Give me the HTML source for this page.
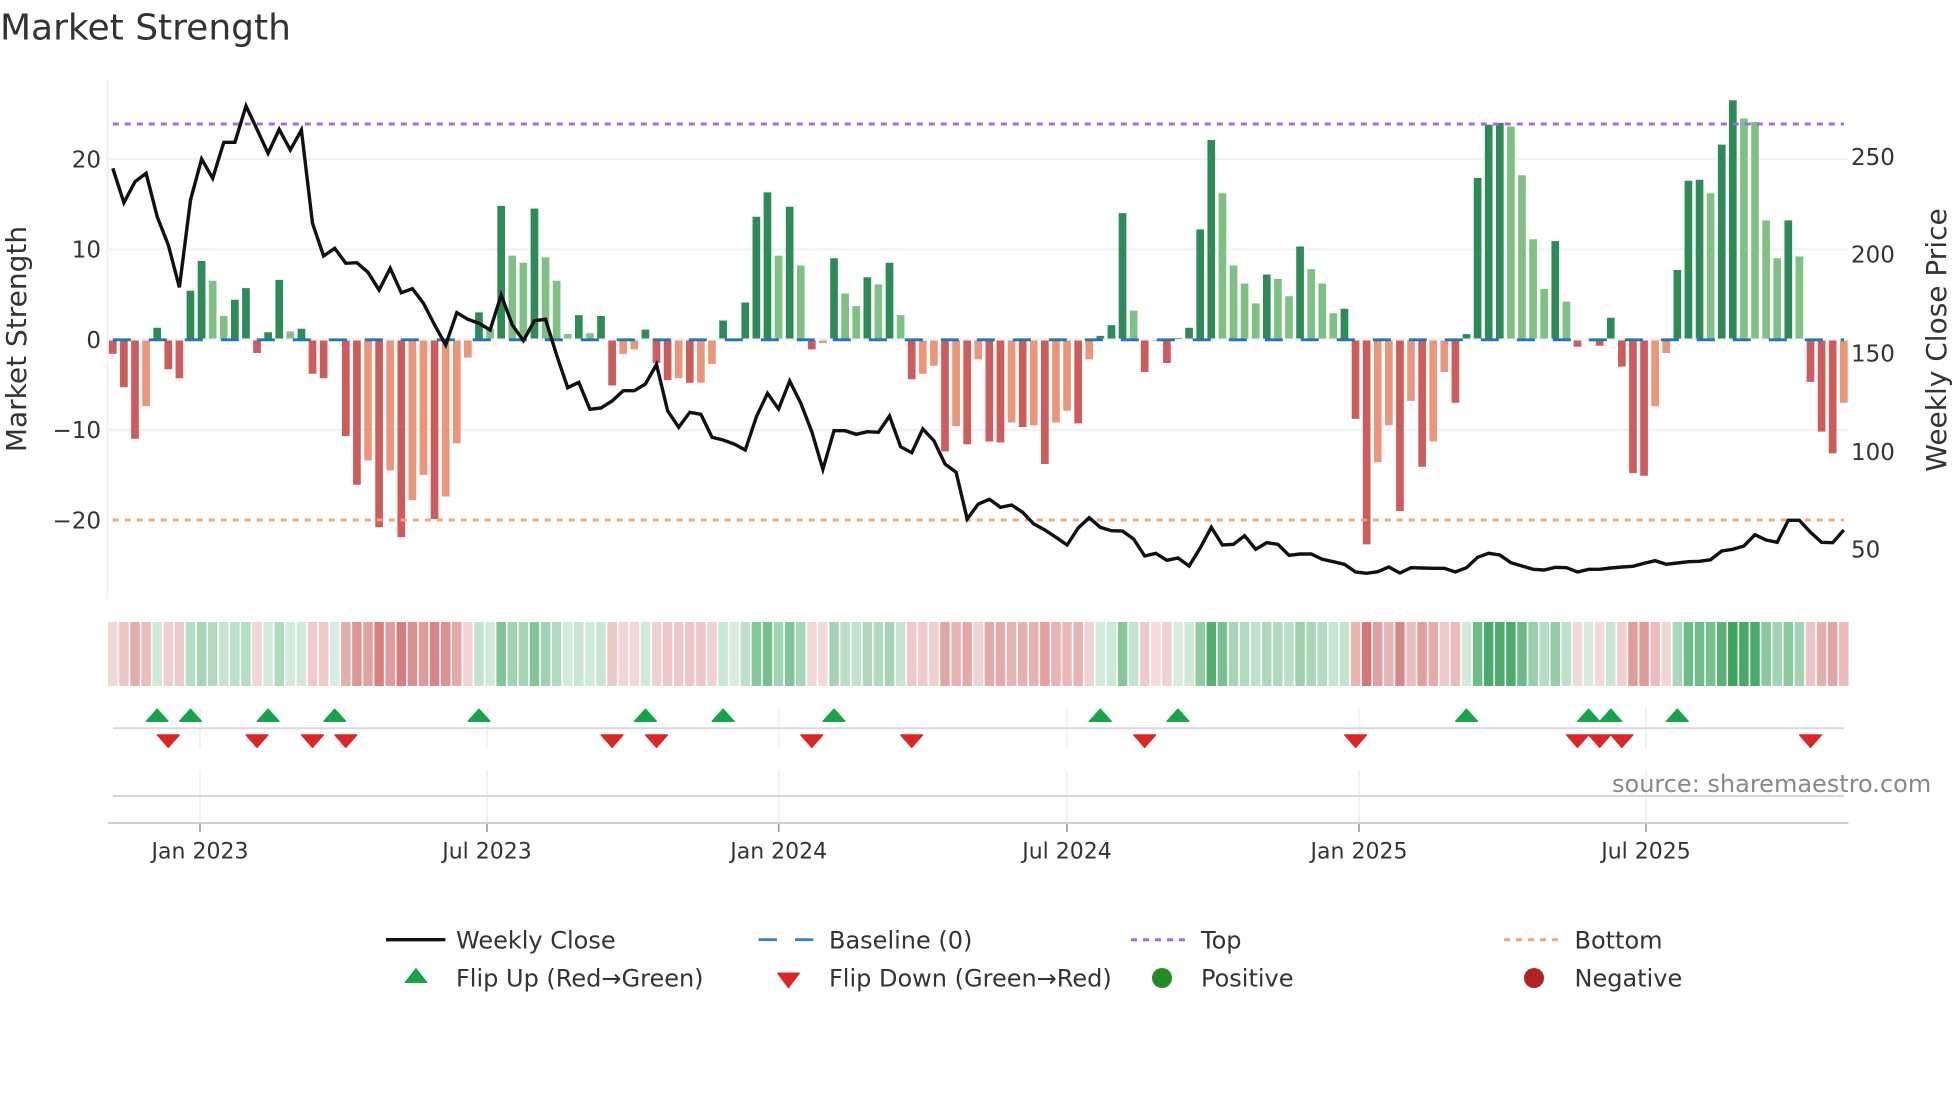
<!DOCTYPE html>
<html><head><meta charset="utf-8"><title>Market Strength</title>
<style>html,body{margin:0;padding:0;background:#fff;width:1960px;height:1102px;overflow:hidden}svg{display:block;filter:blur(.35px)}text{font-family:"DejaVu Sans",sans-serif;fill:#333}</style></head>
<body>
<svg id="s" xmlns="http://www.w3.org/2000/svg" width="1960" height="1102" viewBox="0 0 1960 1102">
<rect width="1960" height="1102" fill="#fff"/>
<g id="grid" stroke="#f1f2f6" stroke-width="2.4">
<line x1="108" x2="1848" y1="159" y2="159"/><line x1="108" x2="1848" y1="249.5" y2="249.5"/><line x1="108" x2="1848" y1="339.5" y2="339.5"/><line x1="108" x2="1848" y1="430" y2="430"/>
<line x1="107.5" x2="107.5" y1="80" y2="599"/>
</g>
<g id="vg" stroke="#eceef1" stroke-width="1.5"></g>
<g id="bars"></g>
<line x1="112.8" x2="1844" y1="520" y2="520" stroke="#f0a56f" stroke-width="3" stroke-dasharray="6 6" opacity=".95"/>
<line x1="112.8" x2="1844" y1="124" y2="124" stroke="#9f6fe0" stroke-width="3" stroke-dasharray="6 6"/>
<line x1="112.8" x2="1844" y1="339.8" y2="339.8" stroke="#1f77b4" stroke-width="2.8" stroke-dasharray="18 18"/>
<path id="pl" fill="none" stroke="#111" stroke-width="3.4" stroke-linejoin="miter"/>
<g id="heat"></g>
<line x1="113" x2="1844" y1="728.3" y2="728.3" stroke="#d6d9de" stroke-width="2"/>
<line x1="113" x2="1844" y1="796" y2="796" stroke="#d8d8d8" stroke-width="2"/>
<line x1="108" x2="1848.5" y1="823" y2="823" stroke="#cfcfcf" stroke-width="2"/>
<g id="flips"></g>
<g font-size="23">
<text x="101" y="167.3" text-anchor="end">20</text>
<text x="101" y="257.5" text-anchor="end">10</text>
<text x="101" y="348" text-anchor="end">0</text>
<text x="101" y="438" text-anchor="end">−10</text>
<text x="101" y="528.5" text-anchor="end">−20</text>
<text x="1851" y="165">250</text>
<text x="1851" y="262.5">200</text>
<text x="1851" y="361.5">150</text>
<text x="1851" y="460">100</text>
<text x="1851" y="557.5">50</text>
</g>
<g font-size="22" text-anchor="middle">
<text x="200" y="858.5">Jan 2023</text>
<text x="487" y="858.5">Jul 2023</text>
<text x="778.7" y="858.5">Jan 2024</text>
<text x="1067" y="858.5">Jul 2024</text>
<text x="1359" y="858.5">Jan 2025</text>
<text x="1646" y="858.5">Jul 2025</text>
</g>
<text x="0" y="39.5" font-size="36">Market Strength</text>
<text font-size="28" text-anchor="middle" transform="translate(26 339) rotate(-90)">Market Strength</text>
<text font-size="28" text-anchor="middle" transform="translate(1946 340) rotate(-90)">Weekly Close Price</text>
<text x="1612" y="792" font-size="24" style="fill:#888">source: sharemaestro.com</text>
<line x1="386" x2="445.4" y1="939.7" y2="939.7" stroke="#111" stroke-width="3.4"/>
<line x1="758.6" x2="813.3" y1="939.7" y2="939.7" stroke="#1f77b4" stroke-width="2.8" stroke-dasharray="18.3 18.1" opacity=".9"/>
<line x1="1131" x2="1187" y1="939.7" y2="939.7" stroke="#9f6fe0" stroke-width="3" stroke-dasharray="6 6"/>
<line x1="1504" x2="1559" y1="939.7" y2="939.7" stroke="#f0a56f" stroke-width="3" stroke-dasharray="6 6"/>
<path d="M416 968.8L405.5 982.3H426.5Z" fill="#16a34a" stroke="#16a34a" stroke-width="1.5" stroke-linejoin="round"/>
<path d="M788.5 987.5L778 973.3H799Z" fill="#dc2626" stroke="#dc2626" stroke-width="1.5" stroke-linejoin="round"/>
<circle cx="1162" cy="978" r="10" fill="#228b22"/>
<circle cx="1534" cy="978" r="10" fill="#b22222"/>
<g font-size="24">
<text x="456" y="948.5">Weekly Close</text>
<text x="829" y="948.5">Baseline (0)</text>
<text x="1201" y="948.5">Top</text>
<text x="1574.5" y="948.5">Bottom</text>
<text x="456" y="986.5">Flip Up (Red→Green)</text>
<text x="829" y="986.5">Flip Down (Green→Red)</text>
<text x="1201" y="986.5">Positive</text>
<text x="1574.5" y="986.5">Negative</text>
</g>
</svg>
<script>
var NS="http://www.w3.org/2000/svg",X0=112.8,DX=11.096;
function el(p,t,a){var e=document.createElementNS(NS,t);for(var k in a)e.setAttribute(k,a[k]);document.getElementById(p).appendChild(e);return e}
var B="-1.6 -5.3 -11 -7.4l 1.3 -3.3 -4.3 5.4 8.7 6.5l 2.6l 4.4 5.7 -1.5 .8 6.6 .9l 1.2 -3.8 -4.3 0 -10.7 -16.1 -13.4l -20.8 -14.5l -21.9 -17.8l -15l -19.9 -17.4l -11.5l -2l 3 1.2l 14.8 9.3l 8.5l 14.5 9.1l 6.5l .6l 2.7 .7l 2.6 -5.1 -1.6l -1.1l 1.1 -2.6 -4.5 -4.3l -4.8 -4.8l -2.7l 2.1 0 4.1 13.6 16.3 9.3l 14.7 8.2l -1.1 -.4l 9 5.1l 3.7l 6.9 6.1l 8.5 2.7l -4.4 -3.8l -2.9l -12.4 -9.6l -11.6 -2.2l -11.3 -11.4 -9.2l -9.7 -9.5l -13.8 -9.2l -7.9l -9.3 -2.2l .4 1.6 14 3.2l -3.6 -.1l -2.6 .15 1.3 12.2 22.1 16.2l 8.2l 6.2l 4l 7.2 6.7l 4.8l 10.3 7.8l 6.2l 2.9l 3.4 -8.8 -22.7 -13.6l -9.5l -19 -6.8l -14.1 -11.3l -3.6l -7 .6 17.9 23.8 24 23.6l 18.2l 11.1l 5.6l 10.9 4.2l -.8 0 -.7 2.4 -3 -14.8 -15.1 -7.4l -1.5l 7.7 17.6 17.7 16.2l 21.6 26.5 24.5l 24.1l 13.2l 9l 13.2 9.2l -4.7 -10.2 -12.6 -7l".split(" ");
var P=[168.3,202.7,181.7,173.3,216.7,245,287.3,200,159,178.3,142.3,142.3,106,129.3,153.3,129.3,150,130,223.3,256,248.3,263.3,262.7,272.3,290,268.3,292.7,288.7,303.3,325,345,312.7,319.3,323.3,330,295,325,340.7,320.7,319.3,355,387.7,382.3,409.3,408,401,390.7,390.7,384,364.5,410.7,427.3,412.3,414.3,437.3,440,444,450,416.7,393.3,409,381,403.3,431.7,469.3,430.7,430.7,434.3,431.7,432.3,416,446.7,452.7,429,440.7,464,472.3,519,504,499.3,507.3,505,512.3,524,530,537.3,545,528,517.7,527.3,530.7,531,539,556,553.3,560.3,558,566,548,527.3,545,544.3,535.7,549.3,542.7,544.3,555.3,554,554,559.3,561.7,564.3,572,573.3,571.7,567,573,567.7,568,568.3,568.3,572,567.7,557.3,553.3,555,562.7,566,569.3,570,567.3,567.7,572,569.3,569.3,568,567,566.3,563.3,560.7,564.3,563,561.7,561.3,559.7,551,549.3,546,534.7,540,542.3,520.3,520.3,532.3,542.3,542.7,530];
var U=[4,7,14,20,33,48,55,65,89,96,122,133,135,141],D=[5,13,18,21,45,49,63,72,93,112,132,134,136,153];
var T=[200,487,778.7,1067,1359,1646];
var d={g:"",G:"",r:"",R:""},pp="";
B.forEach(function(s,i){
 var l=s.slice(-1)=="l",v=parseFloat(s),c=X0+DX*i,x=(c-3.85).toFixed(2),Z=339.5,h=Math.abs(v)*9.025;
 if(v!=0){
  var y0=v>0?Z-h:Z+1, hh=Math.max(h-1,.6);
  var k=v>0?(l?"G":"g"):(l?"R":"r");
  d[k]+="M"+x+" "+y0.toFixed(1)+"h7.7v"+hh.toFixed(1)+"h-7.7z";
 }
 var f;
 if(v>=0){var a=.18+.7*v/27;f="rgb("+Math.round(255-225*a)+","+Math.round(255-105*a)+","+Math.round(255-185*a)+")"}
 else{var a=.17+.58*(-v)/27;f="rgb("+Math.round(255-65*a)+","+Math.round(255-205*a)+","+Math.round(255-205*a)+")"}
 el("heat","rect",{x:(c-4.75).toFixed(2),y:622,width:9.5,height:64,fill:f});
 pp+=(i?"L":"M")+c.toFixed(1)+" "+P[i];
});
el("bars","path",{d:d.g,fill:"#2e8b57"});el("bars","path",{d:d.G,fill:"#81c084"});el("bars","path",{d:d.r,fill:"#cd5c5c"});el("bars","path",{d:d.R,fill:"#e9967a"});
document.getElementById("pl").setAttribute("d",pp);
T.forEach(function(x){
 el("vg","line",{x1:x,x2:x,y1:708,y2:748});
 el("vg","line",{x1:x,x2:x,y1:770,y2:823});
 el("flips","line",{x1:x,x2:x,y1:824,y2:832,stroke:"#999","stroke-width":1.6});
});
U.forEach(function(i){var c=(X0+DX*i).toFixed(1);el("flips","path",{d:"M"+c+" 709.3L"+(c-10.8)+" 721.2H"+(+c+10.8)+"Z",fill:"#16a34a",stroke:"#16a34a","stroke-width":1.5,"stroke-linejoin":"round"})});
D.forEach(function(i){var c=(X0+DX*i).toFixed(1);el("flips","path",{d:"M"+c+" 747.3L"+(c-10.8)+" 735H"+(+c+10.8)+"Z",fill:"#dc2626",stroke:"#dc2626","stroke-width":1.5,"stroke-linejoin":"round"})});
</script>
</body></html>
